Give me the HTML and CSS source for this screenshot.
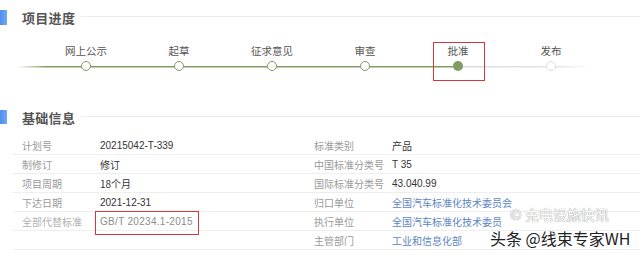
FILE: index.html
```html
<!DOCTYPE html>
<html lang="zh">
<head>
<meta charset="utf-8">
<link rel="stylesheet" href="styles.css">
</head>
<body>
<div class="page">
  <div class="head head-1">
    <span class="bar"></span>
    <span class="title">项目进度</span>
    <span class="rule"></span>
  </div>

  <div class="steps">
    <div class="step done"><span class="label">网上公示</span><span class="dot"></span></div>
    <div class="step done"><span class="label">起草</span><span class="dot"></span></div>
    <div class="step done"><span class="label">征求意见</span><span class="dot"></span></div>
    <div class="step done"><span class="label">审查</span><span class="dot"></span></div>
    <div class="step active marked"><span class="label">批准</span><span class="dot"></span></div>
    <div class="step todo"><span class="label">发布</span><span class="dot"></span></div>
  </div>

  <div class="head head-2">
    <span class="bar"></span>
    <span class="title">基础信息</span>
    <span class="rule"></span>
  </div>

  <div class="info">
    <div class="row"><span class="k">计划号</span><span class="v num">20215042-T-339</span><span class="k">标准类别</span><span class="v">产品</span></div>
    <div class="row"><span class="k">制修订</span><span class="v">修订</span><span class="k">中国标准分类号</span><span class="v num">T 35</span></div>
    <div class="row"><span class="k">项目周期</span><span class="v">18个月</span><span class="k">国际标准分类号</span><span class="v num">43.040.99</span></div>
    <div class="row"><span class="k">下达日期</span><span class="v num">2021-12-31</span><span class="k">归口单位</span><span class="v link">全国汽车标准化技术委员会</span></div>
    <div class="row"><span class="k faded">全部代替标准</span><span class="v num faded marked">GB/T 20234.1-2015</span><span class="k">执行单位</span><span class="v link">全国汽车标准化技术委员</span></div>
    <div class="row"><span class="k"></span><span class="v"></span><span class="k">主管部门</span><span class="v link">工业和信息化部</span></div>
  </div>

  <div class="ghost">© 充电设施快讯</div>
  <div class="watermark">头条 @线束专家WH</div>
</div>
</body>
</html>
```

FILE: styles.css
```css
* { box-sizing: border-box; margin: 0; padding: 0; }
html, body { background: #fff; }
body {
  width: 640px;
  height: 254px;
  overflow: hidden;
  font-family: "Noto Sans CJK SC", "Liberation Sans", sans-serif;
}
.page {
  position: relative;
  padding-top: 10px;
  height: 254px;
}
.head {
  display: flex;
  align-items: center;
  height: 15px;
}
.bar {
  width: 7px;
  height: 15px;
  background: linear-gradient(to right, #4f8eef, #74a9f3);
}
.title {
  margin-left: 15px;
  font-size: 13px;
  line-height: 15px;
  font-weight: bold;
  color: #555;
  letter-spacing: 0.3px;
}
.rule {
  flex: 1;
  height: 1px;
  margin-left: 6px;
  margin-top: -2px;
  background: #ececec;
}
.steps {
  margin-top: 20px;
  margin-left: 17px;
  width: 573px;
  padding-left: 22.5px;
  display: grid;
  grid-template-columns: repeat(6, 93px);
  background-image: linear-gradient(to right, rgba(127,156,99,0) 0, #7f9c63 30px, #7f9c63 441px, #dcdcdc 441px, #e4e4e4 540px, rgba(230,230,230,0) 573px);
  background-size: 100% 1.5px;
  background-position: 0 21px;
  background-repeat: no-repeat;
}
.step {
  position: relative;
  display: flex;
  flex-direction: column;
  align-items: center;
}
.label {
  font-size: 10.5px;
  line-height: 12px;
  height: 12px;
  color: #555;
  white-space: nowrap;
}
.dot {
  margin-top: 4px;
  width: 10px;
  height: 10px;
  border-radius: 50%;
  background: #fff;
}
.done .dot { border: 1.5px solid #7f9c63; }
.active .dot { background: #7f9c63; }
.todo .dot { border: 1.5px solid #dcdcdc; }
.step.marked::after {
  content: "";
  position: absolute;
  left: 21px;
  top: -3px;
  width: 50px;
  height: 37px;
  border: 1.5px solid #d6373d;
}
.head-2 {
  margin-top: 39px;
  height: 14px;
}
.head-2 .bar { height: 14px; }
.info {
  margin-top: 12px;
  margin-left: 13px;
}
.row {
  display: grid;
  grid-template-columns: 78px 214px 78px 1fr;
  align-items: center;
  height: 19px;
  padding-left: 9px;
  border-bottom: 1px solid #eeeeee;
}
.k {
  font-size: 10px;
  color: #9a9a9a;
  white-space: nowrap;
}
.v {
  position: relative;
  font-size: 10px;
  color: #333;
  white-space: nowrap;
}
.num {
  font-family: "Liberation Sans", Arial, sans-serif;
  font-size: 10px;
}
.link { color: #5d86c2; }
.k.faded { color: #b0b0b0; }
.v.faded { color: #8c8c8c; letter-spacing: 0.3px; }
.v.marked::after {
  content: "";
  position: absolute;
  left: -5px;
  top: -5px;
  width: 102px;
  height: 22px;
  border: 1.5px solid #d6373d;
}
.ghost {
  position: absolute;
  left: 510px;
  top: 207px;
  font-size: 14px;
  line-height: 15px;
  color: #fff;
  text-shadow: 0 0 1px #999, 0 0 1px #999;
  white-space: nowrap;
}
.watermark {
  position: absolute;
  left: 490px;
  top: 229px;
  font-size: 16px;
  line-height: 18px;
  color: #222;
  text-shadow: 0 0 2px #fff, 0 0 2px #fff, 0 0 2px #fff;
  white-space: nowrap;
}
```
